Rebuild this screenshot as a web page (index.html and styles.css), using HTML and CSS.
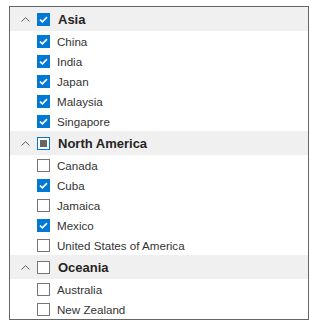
FILE: index.html
```html
<!DOCTYPE html>
<html lang="en">
<head>
    <meta charset="UTF-8">
    <meta name="viewport" content="width=device-width, initial-scale=1.0">
    <title>Region filter</title>
    <link rel="stylesheet" href="styles.css">
</head>
<body>
    <div class="tree">
        <div class="group">
            <div class="group-head">
                <svg class="chevron" width="9" height="5" viewBox="0 0 9 5"><path d="M0.5 4.5 L4.5 0.7 L8.5 4.5" fill="none" stroke="#605e5c" stroke-width="1"/></svg>
                <span class="box checked"><svg width="9" height="7" viewBox="0 0 9 7"><path d="M1 3.6 L3.4 5.8 L8 1.1" fill="none" stroke="#fff" stroke-width="1.6"/></svg></span>
                <span class="group-label">Asia</span>
            </div>
            <div class="item"><span class="box checked"><svg width="9" height="7" viewBox="0 0 9 7"><path d="M1 3.6 L3.4 5.8 L8 1.1" fill="none" stroke="#fff" stroke-width="1.6"/></svg></span>China</div>
            <div class="item"><span class="box checked"><svg width="9" height="7" viewBox="0 0 9 7"><path d="M1 3.6 L3.4 5.8 L8 1.1" fill="none" stroke="#fff" stroke-width="1.6"/></svg></span>India</div>
            <div class="item"><span class="box checked"><svg width="9" height="7" viewBox="0 0 9 7"><path d="M1 3.6 L3.4 5.8 L8 1.1" fill="none" stroke="#fff" stroke-width="1.6"/></svg></span>Japan</div>
            <div class="item"><span class="box checked"><svg width="9" height="7" viewBox="0 0 9 7"><path d="M1 3.6 L3.4 5.8 L8 1.1" fill="none" stroke="#fff" stroke-width="1.6"/></svg></span>Malaysia</div>
            <div class="item"><span class="box checked"><svg width="9" height="7" viewBox="0 0 9 7"><path d="M1 3.6 L3.4 5.8 L8 1.1" fill="none" stroke="#fff" stroke-width="1.6"/></svg></span>Singapore</div>
        </div>
        <div class="group">
            <div class="group-head">
                <svg class="chevron" width="9" height="5" viewBox="0 0 9 5"><path d="M0.5 4.5 L4.5 0.7 L8.5 4.5" fill="none" stroke="#605e5c" stroke-width="1"/></svg>
                <span class="box partial"><span class="dot"></span></span>
                <span class="group-label">North America</span>
            </div>
            <div class="item"><span class="box"></span>Canada</div>
            <div class="item"><span class="box checked"><svg width="9" height="7" viewBox="0 0 9 7"><path d="M1 3.6 L3.4 5.8 L8 1.1" fill="none" stroke="#fff" stroke-width="1.6"/></svg></span>Cuba</div>
            <div class="item"><span class="box"></span>Jamaica</div>
            <div class="item"><span class="box checked"><svg width="9" height="7" viewBox="0 0 9 7"><path d="M1 3.6 L3.4 5.8 L8 1.1" fill="none" stroke="#fff" stroke-width="1.6"/></svg></span>Mexico</div>
            <div class="item"><span class="box"></span>United States of America</div>
        </div>
        <div class="group">
            <div class="group-head">
                <svg class="chevron" width="9" height="5" viewBox="0 0 9 5"><path d="M0.5 4.5 L4.5 0.7 L8.5 4.5" fill="none" stroke="#605e5c" stroke-width="1"/></svg>
                <span class="box"></span>
                <span class="group-label">Oceania</span>
            </div>
            <div class="item"><span class="box"></span>Australia</div>
            <div class="item"><span class="box"></span>New Zealand</div>
        </div>
    </div>
</body>
</html>
```

FILE: styles.css
```css
body {
    margin: 0;
    padding: 6px 0 0 9px;
    font-family: "Liberation Sans", Arial, sans-serif;
    background-color: #fff;
}

.tree {
    width: 298px;
    border: 1px solid #666;
}

.group-head {
    display: flex;
    align-items: center;
    height: 24px;
    background-color: #f0f0f0;
    padding-left: 11px;
}

.chevron {
    display: block;
    margin-right: 7px;
}

.group-label {
    margin-left: 8px;
    font-size: 13px;
    font-weight: bold;
    color: #252423;
}

.item {
    display: flex;
    align-items: center;
    height: 20px;
    padding-left: 27px;
    font-size: 11.6px;
    color: #333;
}

.item .box {
    margin-right: 7px;
}

.box {
    box-sizing: border-box;
    display: flex;
    align-items: center;
    justify-content: center;
    width: 13px;
    height: 13px;
    border: 1px solid #767676;
    background-color: #fff;
}

.box.checked {
    background-color: #0078d4;
    border-color: #0078d4;
}

.box.checked svg {
    display: block;
}

.box.partial {
    border-color: #0078d4;
}

.dot {
    width: 7px;
    height: 7px;
    background-color: #666;
}
```
